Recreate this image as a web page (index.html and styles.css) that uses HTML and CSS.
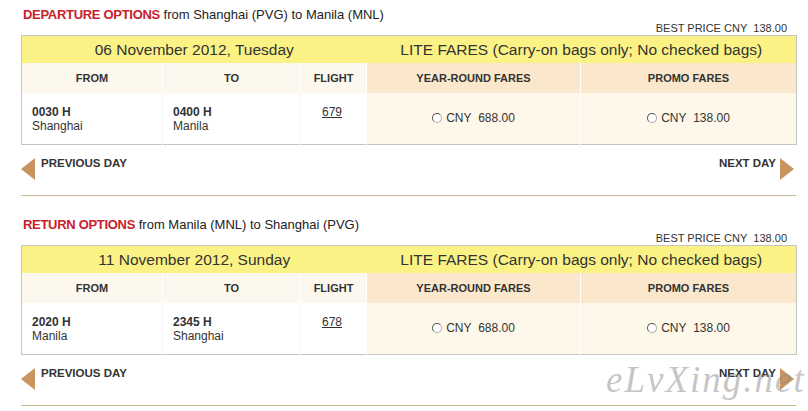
FILE: index.html
```html
<!DOCTYPE html>
<html lang="en">

<head>
    <meta http-equiv="Content-Type" content="text/html; charset=UTF-8">
    <title>Select Flights</title>
    <link rel="stylesheet" href="styles.css">
</head>

<body>

    <section class="leg">
        <h2 class="leg-title"><span class="leg-label">DEPARTURE OPTIONS</span> from Shanghai (PVG) to Manila (MNL)</h2>
        <p class="best-price">BEST PRICE CNY&nbsp; 138.00</p>
        <table class="fares">
            <colgroup>
                <col class="col-from">
                <col class="col-to">
                <col class="col-flight">
                <col class="col-year">
                <col class="col-promo">
            </colgroup>
            <tr class="date-row">
                <td colspan="3">06 November 2012, Tuesday</td>
                <td colspan="2">LITE FARES (Carry-on bags only; No checked bags)</td>
            </tr>
            <tr class="head-row">
                <th>FROM</th>
                <th>TO</th>
                <th>FLIGHT</th>
                <th class="fare-head">YEAR-ROUND FARES</th>
                <th class="fare-head">PROMO FARES</th>
            </tr>
            <tr class="flight-row">
                <td><b>0030 H</b><br>Shanghai</td>
                <td><b>0400 H</b><br>Manila</td>
                <td class="flight-no"><a href="#">679</a></td>
                <td class="fare"><label><span class="radio"></span>CNY&nbsp; 688.00</label></td>
                <td class="fare"><label><span class="radio"></span>CNY&nbsp; 138.00</label></td>
            </tr>
        </table>
        <div class="day-nav">
            <a class="prev-day" href="#"><span class="arrow-left"></span>PREVIOUS DAY</a>
            <a class="next-day" href="#">NEXT DAY<span class="arrow-right"></span></a>
        </div>
    </section>

    <section class="leg">
        <h2 class="leg-title"><span class="leg-label">RETURN OPTIONS</span> from Manila (MNL) to Shanghai (PVG)</h2>
        <p class="best-price">BEST PRICE CNY&nbsp; 138.00</p>
        <table class="fares">
            <colgroup>
                <col class="col-from">
                <col class="col-to">
                <col class="col-flight">
                <col class="col-year">
                <col class="col-promo">
            </colgroup>
            <tr class="date-row">
                <td colspan="3">11 November 2012, Sunday</td>
                <td colspan="2">LITE FARES (Carry-on bags only; No checked bags)</td>
            </tr>
            <tr class="head-row">
                <th>FROM</th>
                <th>TO</th>
                <th>FLIGHT</th>
                <th class="fare-head">YEAR-ROUND FARES</th>
                <th class="fare-head">PROMO FARES</th>
            </tr>
            <tr class="flight-row">
                <td><b>2020 H</b><br>Manila</td>
                <td><b>2345 H</b><br>Shanghai</td>
                <td class="flight-no"><a href="#">678</a></td>
                <td class="fare"><label><span class="radio"></span>CNY&nbsp; 688.00</label></td>
                <td class="fare"><label><span class="radio"></span>CNY&nbsp; 138.00</label></td>
            </tr>
        </table>
        <div class="day-nav">
            <a class="prev-day" href="#"><span class="arrow-left"></span>PREVIOUS DAY</a>
            <a class="next-day" href="#">NEXT DAY<span class="arrow-right"></span></a>
        </div>
    </section>

    <div class="watermark">eLvXing.net</div>

</body>

</html>
```

FILE: styles.css
```css
body {
    margin: 0;
    font-family: "Liberation Sans", Arial, sans-serif;
    color: #333;
    background: #fff;
    position: relative;
    width: 808px;
    height: 411px;
    overflow: hidden;
}

.leg {
    margin-left: 21px;
    width: 775px;
}

.leg + .leg {
    margin-top: 14px;
}

.leg-title {
    margin: 0;
    padding: 8px 0 0 2px;
    font-size: 13px;
    line-height: 14px;
    font-weight: normal;
    color: #222;
}

.leg-label {
    color: #c8202b;
    font-weight: bold;
    letter-spacing: -0.3px;
}

.best-price {
    margin: 0;
    padding-right: 9px;
    text-align: right;
    font-size: 11px;
    line-height: 13px;
    color: #333;
}

.fares {
    width: 775px;
    table-layout: fixed;
    border-collapse: collapse;
    border: 1px solid #c4c4c4;
}

.col-from { width: 141px; }
.col-to { width: 138px; }
.col-flight { width: 66px; }
.col-year { width: 214px; }
.col-promo { width: 216px; }

.fares td,
.fares th {
    padding: 0;
}

.date-row td {
    height: 27px;
    background: #fbf285;
    text-align: center;
    font-size: 15.5px;
    color: #333;
}

.head-row th {
    height: 30px;
    background: #fdf8ee;
    font-size: 11px;
    font-weight: bold;
    color: #333;
    border-left: 1px solid #fff;
}

.head-row th:first-child {
    border-left: none;
}

.head-row .fare-head {
    background: #fbe8cc;
}

.flight-row td {
    height: 39px;
    vertical-align: top;
    padding: 12px 0 0 10px;
    font-size: 12px;
    line-height: 14px;
    background: #fff;
    border-left: 1px solid #f6f6f6;
}

.flight-row td:first-child {
    border-left: none;
}

.flight-row .flight-no {
    padding-left: 21px;
}

.flight-no a {
    color: #333;
    text-decoration: underline;
}

.flight-row .fare {
    padding: 0;
    vertical-align: middle;
    text-align: center;
    background: #fef8ea;
    border-left: 1px solid #fff;
}

.fare label {
    display: inline-flex;
    align-items: center;
    gap: 4px;
    color: #333;
}

.radio {
    width: 8px;
    height: 8px;
    border-radius: 50%;
    background: #fff;
    border: 1px solid #aaa;
    border-top-color: #555;
    border-left-color: #555;
}

.day-nav {
    display: flex;
    justify-content: space-between;
    align-items: flex-start;
    height: 51px;
    padding-top: 13px;
    box-sizing: border-box;
    border-bottom: 1px solid #c6b98e;
}

.day-nav a {
    display: flex;
    align-items: flex-start;
    font-size: 11.5px;
    line-height: 11px;
    font-weight: bold;
    color: #333;
    text-decoration: none;
}

.prev-day {
    gap: 6px;
}

.next-day {
    gap: 4px;
    margin-right: 2px;
}

.arrow-left {
    width: 0;
    height: 0;
    border-top: 11.5px solid transparent;
    border-bottom: 11.5px solid transparent;
    border-right: 14px solid #c9945f;
}

.arrow-right {
    width: 0;
    height: 0;
    border-top: 11.5px solid transparent;
    border-bottom: 11.5px solid transparent;
    border-left: 14px solid #c9945f;
}

.watermark {
    position: absolute;
    left: 606px;
    top: 358px;
    font-family: "Liberation Serif", serif;
    font-style: italic;
    font-size: 37px;
    letter-spacing: 2px;
    color: rgba(140, 140, 140, 0.5);
    pointer-events: none;
}
```
